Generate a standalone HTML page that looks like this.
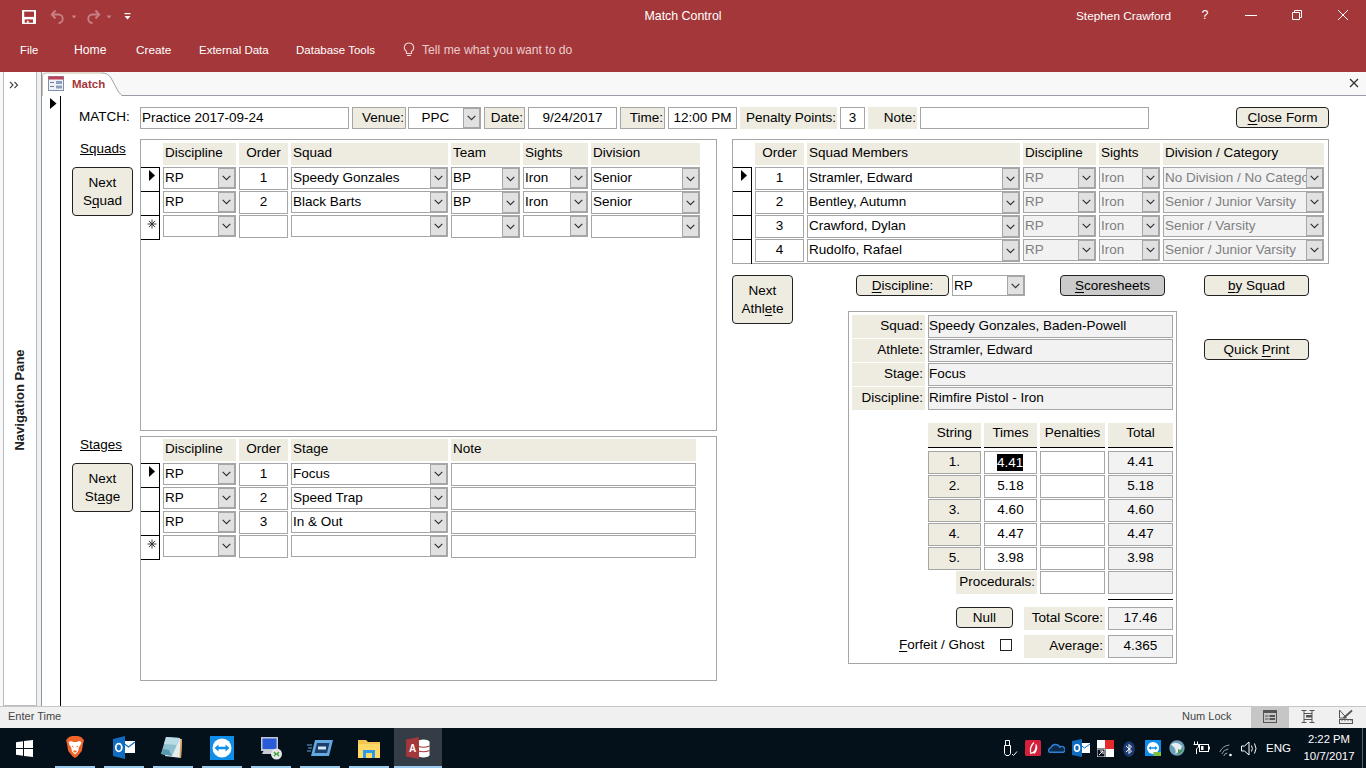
<!DOCTYPE html>
<html><head><meta charset="utf-8"><title>Match Control</title>
<style>
html,body{margin:0;padding:0;width:1366px;height:768px;overflow:hidden;background:#fff;}
body{position:relative;font-family:'Liberation Sans', sans-serif;font-size:13.5px;color:#000;}
body>div,body>svg{position:absolute;box-sizing:border-box;}
u{text-decoration:underline;text-underline-offset:2px;}
</style></head><body>
<div style="left:0px;top:0px;width:1366px;height:72px;background:#A4373A;"></div>
<div style="left:600px;top:1px;width:166px;height:31px;line-height:31px;font-size:12.4px;color:#fff;text-align:center;font-weight:normal;white-space:nowrap;overflow:hidden;">Match Control</div>
<div style="left:1060px;top:1px;width:130px;height:31px;line-height:31px;font-size:11.8px;color:#fff;text-align:left;font-weight:normal;white-space:nowrap;overflow:hidden;padding-left:16px;">Stephen Crawford</div>
<div style="left:1195px;top:0px;width:20px;height:30px;line-height:30px;font-size:12.5px;color:#fff;text-align:center;font-weight:normal;white-space:nowrap;overflow:hidden;">?</div>
<div style="left:1245px;top:15px;width:12px;height:1px;background:#fff;"></div>
<svg style="left:1291px;top:9px;width:13px;height:12px" viewBox="0 0 13 12"><path d="M1.5 3.5 h7 v7 h-7 z M3.5 3.5 v-2 h7 v7 h-2" fill="none" stroke="#fff" stroke-width="1"/></svg>
<svg style="left:1337px;top:9px;width:12px;height:12px" viewBox="0 0 12 12"><path d="M1 1 L11 11 M11 1 L1 11" fill="none" stroke="#fff" stroke-width="1"/></svg>
<svg style="left:22px;top:10px;width:14px;height:14px" viewBox="0 0 14 14"><rect x="0" y="0" width="14" height="14" rx="0.8" fill="#fff"/><rect x="2.2" y="1.6" width="9.8" height="5.3" fill="#A4373A"/><rect x="2.7" y="9.4" width="8.3" height="3.3" fill="#A4373A"/><rect x="4.9" y="10.8" width="1.8" height="2" fill="#fff"/></svg>
<svg style="left:50px;top:9px;width:28px;height:15px" viewBox="0 0 28 15"><path d="M2 5.5 h6.5 a4.2 4.2 0 0 1 0 8.5" fill="none" stroke="#C98083" stroke-width="1.9"/><path d="M5.5 1.5 L1.8 5.5 L5.5 9.5" fill="none" stroke="#C98083" stroke-width="1.9"/><path d="M21.5 6.5 h5 l-2.5 3 z" fill="#C98083"/></svg>
<svg style="left:85px;top:9px;width:28px;height:15px" viewBox="0 0 28 15"><path d="M14 5.5 h-6.5 a4.2 4.2 0 0 0 0 8.5" fill="none" stroke="#C98083" stroke-width="1.9"/><path d="M10.5 1.5 L14.2 5.5 L10.5 9.5" fill="none" stroke="#C98083" stroke-width="1.9"/><path d="M21.5 6.5 h5 l-2.5 3 z" fill="#C98083"/></svg>
<svg style="left:124px;top:13px;width:7px;height:8px" viewBox="0 0 7 8"><rect x="0.5" y="0" width="6" height="1.2" fill="#fff"/><path d="M0.5 3 h6 l-3 3.5 z" fill="#fff"/></svg>
<div style="left:20px;top:40px;height:20px;line-height:20px;font-size:11.3px;color:#fff;white-space:nowrap">File</div>
<div style="left:74px;top:40px;height:20px;line-height:20px;font-size:12.2px;color:#fff;white-space:nowrap">Home</div>
<div style="left:136px;top:40px;height:20px;line-height:20px;font-size:11.8px;color:#fff;white-space:nowrap">Create</div>
<div style="left:199px;top:40px;height:20px;line-height:20px;font-size:11.5px;color:#fff;white-space:nowrap">External Data</div>
<div style="left:296px;top:40px;height:20px;line-height:20px;font-size:11.5px;color:#fff;white-space:nowrap">Database Tools</div>
<svg style="left:403px;top:42px;width:12px;height:15px" viewBox="0 0 12 15"><path d="M6 1 a4.6 4.6 0 0 0 -2.5 8.5 v2 h5 v-2 a4.6 4.6 0 0 0 -2.5 -8.5 z M4 13.5 h4" fill="none" stroke="#F0D6D6" stroke-width="1.1"/></svg>
<div style="left:422px;top:40px;height:20px;line-height:20px;font-size:12.2px;color:#EBCDCE;white-space:nowrap">Tell me what you want to do</div>
<div style="left:0px;top:72px;width:1366px;height:635px;background:#F8F8F8;"></div>
<div style="left:3px;top:72px;width:34px;height:634px;background:#fff;border-left:1px solid #B9BDC3;border-right:1px solid #B9BDC3;border-bottom:1px solid #B9BDC3;"></div>
<div style="left:37px;top:72px;width:4px;height:634px;background:#EEF0F2;"></div>
<div style="left:41px;top:72px;width:1px;height:634px;background:#92969D;"></div>
<svg style="left:9px;top:81px;width:10px;height:8px" viewBox="0 0 10 8"><path d="M1 0.8 L4 4 L1 7.2 M5.5 0.8 L8.5 4 L5.5 7.2" fill="none" stroke="#444" stroke-width="1.2"/></svg>
<div style="left:-31px;top:393px;width:102px;height:14px;line-height:14px;font-size:13px;font-weight:bold;color:#222;transform:rotate(-90deg);text-align:center;white-space:nowrap">Navigation Pane</div>
<div style="left:42px;top:72px;width:1324px;height:24px;background:#F8F8F8;"></div>
<div style="left:42px;top:95px;width:1324px;height:1px;background:#989DA5;"></div>
<svg style="left:42px;top:72px;width:80px;height:24px" viewBox="0 0 80 24"><path d="M0.5 24 V4 Q0.5 1 4 1 H62 Q66 1 69 6 L76 19 Q79 23 80 23.5 V24 z" fill="#fff"/><path d="M60 1 Q66 1 69 6 L76 19 Q79 23 80 23.5" fill="none" stroke="#A0A4AA" stroke-width="1"/><path d="M0.5 23 V4 Q0.5 1 4 1 H61" fill="none" stroke="#C9BDA6" stroke-width="1"/></svg>
<div style="left:43px;top:95px;width:75px;height:1px;background:#fff;"></div>
<svg style="left:48px;top:76px;width:16px;height:15px" viewBox="0 0 16 15"><rect x="0.5" y="0.5" width="15" height="14" fill="#EEF2F8" stroke="#7F8FA6"/><rect x="0.5" y="0.5" width="15" height="3" fill="#C0405A"/><rect x="2" y="6" width="4" height="1" fill="#6D7C92"/><rect x="2" y="10" width="4" height="1" fill="#6D7C92"/><rect x="8" y="5" width="6" height="3" fill="#8DA0BB"/><rect x="8" y="9.5" width="6" height="3" fill="#8DA0BB"/></svg>
<div style="left:72px;top:74px;height:20px;line-height:20px;font-size:11.5px;font-weight:bold;color:#A4373A;white-space:nowrap">Match</div>
<svg style="left:1349px;top:78px;width:10px;height:10px" viewBox="0 0 10 10"><path d="M1 1 L9 9 M9 1 L1 9" fill="none" stroke="#333" stroke-width="1.3"/></svg>
<div style="left:42px;top:96px;width:1324px;height:610px;background:#fff;"></div>
<div style="left:60px;top:96px;width:1px;height:610px;background:#000;"></div>
<svg style="left:50px;top:98px;width:7px;height:11px" viewBox="0 0 7 11"><path d="M0 0 L6.5 5.5 L0 11 z" fill="#000"/></svg>
<div style="left:76px;top:106px;width:64px;height:21px;line-height:21px;font-size:13.5px;color:#000;text-align:left;font-weight:normal;white-space:nowrap;overflow:hidden;padding-left:3px;">MATCH:</div>
<div style="left:140px;top:107px;width:209px;height:22px;background:#fff;border:1px solid #A6A6A6;"></div>
<div style="left:140px;top:107px;width:209px;height:22px;line-height:22px;font-size:13.5px;color:#000;text-align:left;font-weight:normal;white-space:nowrap;overflow:hidden;padding-left:2px;">Practice 2017-09-24</div>
<div style="left:352px;top:107px;width:54px;height:22px;background:#EEECE1;border:1px solid #A6A6A6;"></div>
<div style="left:352px;top:107px;width:54px;height:22px;line-height:22px;font-size:13.5px;color:#000;text-align:right;font-weight:normal;white-space:nowrap;overflow:hidden;padding-right:2px;">Venue:</div>
<div style="left:408px;top:107px;width:73px;height:22px;background:#fff;border:1px solid #A6A6A6;"></div>
<div style="left:408px;top:107px;width:55px;height:22px;line-height:22px;font-size:13.5px;color:#000;text-align:center;font-weight:normal;white-space:nowrap;overflow:hidden;">PPC</div>
<div style="left:463px;top:107px;width:18px;height:22px;background:#E1E1E1;border-style:solid;border-color:#A6A6A6;border-width:2px 2px 2px 1px;"></div>
<svg style="left:467.0px;top:115.0px;width:9px;height:6px" viewBox="0 0 9 6"><path d="M0.7 0.8 L4.5 4.6 L8.3 0.8" fill="none" stroke="#333" stroke-width="1.2"/></svg>
<div style="left:484px;top:107px;width:41px;height:22px;background:#EEECE1;border:1px solid #A6A6A6;"></div>
<div style="left:484px;top:107px;width:41px;height:22px;line-height:22px;font-size:13.5px;color:#000;text-align:right;font-weight:normal;white-space:nowrap;overflow:hidden;padding-right:2px;">Date:</div>
<div style="left:528px;top:107px;width:89px;height:22px;background:#fff;border:1px solid #A6A6A6;"></div>
<div style="left:528px;top:107px;width:89px;height:22px;line-height:22px;font-size:13.5px;color:#000;text-align:center;font-weight:normal;white-space:nowrap;overflow:hidden;">9/24/2017</div>
<div style="left:620px;top:107px;width:45px;height:22px;background:#EEECE1;border:1px solid #A6A6A6;"></div>
<div style="left:620px;top:107px;width:45px;height:22px;line-height:22px;font-size:13.5px;color:#000;text-align:right;font-weight:normal;white-space:nowrap;overflow:hidden;padding-right:2px;">Time:</div>
<div style="left:668px;top:107px;width:69px;height:22px;background:#fff;border:1px solid #A6A6A6;"></div>
<div style="left:668px;top:107px;width:69px;height:22px;line-height:22px;font-size:13.5px;color:#000;text-align:center;font-weight:normal;white-space:nowrap;overflow:hidden;">12:00 PM</div>
<div style="left:740px;top:107px;width:97px;height:22px;background:#EEECE1;"></div>
<div style="left:740px;top:107px;width:97px;height:22px;line-height:22px;font-size:13.5px;color:#000;text-align:right;font-weight:normal;white-space:nowrap;overflow:hidden;padding-right:1px;">Penalty Points:</div>
<div style="left:840px;top:107px;width:25px;height:22px;background:#fff;border:1px solid #A6A6A6;"></div>
<div style="left:840px;top:107px;width:25px;height:22px;line-height:22px;font-size:13.5px;color:#000;text-align:center;font-weight:normal;white-space:nowrap;overflow:hidden;">3</div>
<div style="left:868px;top:107px;width:49px;height:22px;background:#EEECE1;"></div>
<div style="left:868px;top:107px;width:49px;height:22px;line-height:22px;font-size:13.5px;color:#000;text-align:right;font-weight:normal;white-space:nowrap;overflow:hidden;padding-right:1px;">Note:</div>
<div style="left:920px;top:107px;width:229px;height:22px;background:#fff;border:1px solid #A6A6A6;"></div>
<div style="left:1236px;top:107px;width:93px;height:21px;background:#EEECE1;border:1px solid #222;border-radius:4px;"></div>
<div style="left:1236px;top:107px;width:93px;height:21px;display:flex;align-items:center;justify-content:center;text-align:center;font-size:13.5px;line-height:21px;color:#000;"><span><u>C</u>lose Form</span></div>
<div style="left:80px;top:139px;height:20px;line-height:20px;font-size:13.5px;color:#000;text-decoration:underline;white-space:nowrap">Squads</div>
<div style="left:72px;top:167px;width:61px;height:49px;background:#EEECE1;border:1px solid #222;border-radius:4px;"></div>
<div style="left:72px;top:167px;width:61px;height:49px;display:flex;align-items:center;justify-content:center;text-align:center;font-size:13.5px;line-height:49px;color:#000;"><span style="line-height:18px">Next<br>S<u>q</u>uad</span></div>
<div style="left:140px;top:139px;width:577px;height:292px;background:#fff;border:1px solid #A6A6A6;"></div>
<div style="left:163px;top:143px;width:73px;height:22px;background:#EEECE1;"></div>
<div style="left:163px;top:142px;width:73px;height:22px;line-height:22px;font-size:13.5px;color:#000;text-align:left;font-weight:normal;white-space:nowrap;overflow:hidden;padding-left:2px;">Discipline</div>
<div style="left:239px;top:143px;width:49px;height:22px;background:#EEECE1;"></div>
<div style="left:239px;top:142px;width:49px;height:22px;line-height:22px;font-size:13.5px;color:#000;text-align:center;font-weight:normal;white-space:nowrap;overflow:hidden;">Order</div>
<div style="left:291px;top:143px;width:157px;height:22px;background:#EEECE1;"></div>
<div style="left:291px;top:142px;width:157px;height:22px;line-height:22px;font-size:13.5px;color:#000;text-align:left;font-weight:normal;white-space:nowrap;overflow:hidden;padding-left:2px;">Squad</div>
<div style="left:451px;top:143px;width:69px;height:22px;background:#EEECE1;"></div>
<div style="left:451px;top:142px;width:69px;height:22px;line-height:22px;font-size:13.5px;color:#000;text-align:left;font-weight:normal;white-space:nowrap;overflow:hidden;padding-left:2px;">Team</div>
<div style="left:523px;top:143px;width:65px;height:22px;background:#EEECE1;"></div>
<div style="left:523px;top:142px;width:65px;height:22px;line-height:22px;font-size:13.5px;color:#000;text-align:left;font-weight:normal;white-space:nowrap;overflow:hidden;padding-left:2px;">Sights</div>
<div style="left:591px;top:143px;width:109px;height:22px;background:#EEECE1;"></div>
<div style="left:591px;top:142px;width:109px;height:22px;line-height:22px;font-size:13.5px;color:#000;text-align:left;font-weight:normal;white-space:nowrap;overflow:hidden;padding-left:2px;">Division</div>
<div style="left:159px;top:167px;width:1px;height:73px;background:#000;"></div>
<div style="left:141px;top:167px;width:19px;height:1px;background:#000;"></div>
<div style="left:141px;top:191px;width:19px;height:1px;background:#000;"></div>
<div style="left:141px;top:215px;width:19px;height:1px;background:#000;"></div>
<div style="left:141px;top:239px;width:19px;height:1px;background:#000;"></div>
<svg style="left:149px;top:170px;width:7px;height:11px" viewBox="0 0 7 11"><path d="M0 0 L6 5.5 L0 11 z" fill="#000"/></svg>
<svg style="left:147px;top:219px;width:10px;height:10px" viewBox="0 0 10 10"><path d="M5 0.5 V9.5 M0.5 5 H9.5 M1.8 1.8 L8.2 8.2 M1.8 8.2 L8.2 1.8" fill="none" stroke="#333" stroke-width="1"/></svg>
<div style="left:163px;top:167px;width:73px;height:22px;background:#fff;border:1px solid #A6A6A6;"></div>
<div style="left:163px;top:167px;width:55px;height:22px;line-height:22px;font-size:13.5px;color:#000;text-align:left;font-weight:normal;white-space:nowrap;overflow:hidden;padding-left:2px;">RP</div>
<div style="left:218px;top:167px;width:18px;height:22px;background:#E1E1E1;border-style:solid;border-color:#A6A6A6;border-width:2px 2px 2px 1px;"></div>
<svg style="left:222.0px;top:175.0px;width:9px;height:6px" viewBox="0 0 9 6"><path d="M0.7 0.8 L4.5 4.6 L8.3 0.8" fill="none" stroke="#333" stroke-width="1.2"/></svg>
<div style="left:239px;top:167px;width:49px;height:23px;background:#fff;border:1px solid #A6A6A6;"></div>
<div style="left:239px;top:166px;width:49px;height:23px;line-height:23px;font-size:13.5px;color:#000;text-align:center;font-weight:normal;white-space:nowrap;overflow:hidden;">1</div>
<div style="left:291px;top:167px;width:157px;height:22px;background:#fff;border:1px solid #A6A6A6;"></div>
<div style="left:291px;top:167px;width:139px;height:22px;line-height:22px;font-size:13.5px;color:#000;text-align:left;font-weight:normal;white-space:nowrap;overflow:hidden;padding-left:2px;">Speedy Gonzales</div>
<div style="left:430px;top:167px;width:18px;height:22px;background:#E1E1E1;border-style:solid;border-color:#A6A6A6;border-width:2px 2px 2px 1px;"></div>
<svg style="left:434.0px;top:175.0px;width:9px;height:6px" viewBox="0 0 9 6"><path d="M0.7 0.8 L4.5 4.6 L8.3 0.8" fill="none" stroke="#333" stroke-width="1.2"/></svg>
<div style="left:451px;top:167px;width:69px;height:23px;background:#fff;border:1px solid #A6A6A6;"></div>
<div style="left:451px;top:166px;width:51px;height:23px;line-height:23px;font-size:13.5px;color:#000;text-align:left;font-weight:normal;white-space:nowrap;overflow:hidden;padding-left:2px;">BP</div>
<div style="left:502px;top:167px;width:18px;height:23px;background:#E1E1E1;border-style:solid;border-color:#A6A6A6;border-width:2px 2px 2px 1px;"></div>
<svg style="left:506.0px;top:175.5px;width:9px;height:6px" viewBox="0 0 9 6"><path d="M0.7 0.8 L4.5 4.6 L8.3 0.8" fill="none" stroke="#333" stroke-width="1.2"/></svg>
<div style="left:523px;top:167px;width:65px;height:22px;background:#fff;border:1px solid #A6A6A6;"></div>
<div style="left:523px;top:167px;width:47px;height:22px;line-height:22px;font-size:13.5px;color:#000;text-align:left;font-weight:normal;white-space:nowrap;overflow:hidden;padding-left:2px;">Iron</div>
<div style="left:570px;top:167px;width:18px;height:22px;background:#E1E1E1;border-style:solid;border-color:#A6A6A6;border-width:2px 2px 2px 1px;"></div>
<svg style="left:574.0px;top:175.0px;width:9px;height:6px" viewBox="0 0 9 6"><path d="M0.7 0.8 L4.5 4.6 L8.3 0.8" fill="none" stroke="#333" stroke-width="1.2"/></svg>
<div style="left:591px;top:167px;width:109px;height:23px;background:#fff;border:1px solid #A6A6A6;"></div>
<div style="left:591px;top:166px;width:91px;height:23px;line-height:23px;font-size:13.5px;color:#000;text-align:left;font-weight:normal;white-space:nowrap;overflow:hidden;padding-left:2px;">Senior</div>
<div style="left:682px;top:167px;width:18px;height:23px;background:#E1E1E1;border-style:solid;border-color:#A6A6A6;border-width:2px 2px 2px 1px;"></div>
<svg style="left:686.0px;top:175.5px;width:9px;height:6px" viewBox="0 0 9 6"><path d="M0.7 0.8 L4.5 4.6 L8.3 0.8" fill="none" stroke="#333" stroke-width="1.2"/></svg>
<div style="left:163px;top:191px;width:73px;height:22px;background:#fff;border:1px solid #A6A6A6;"></div>
<div style="left:163px;top:191px;width:55px;height:22px;line-height:22px;font-size:13.5px;color:#000;text-align:left;font-weight:normal;white-space:nowrap;overflow:hidden;padding-left:2px;">RP</div>
<div style="left:218px;top:191px;width:18px;height:22px;background:#E1E1E1;border-style:solid;border-color:#A6A6A6;border-width:2px 2px 2px 1px;"></div>
<svg style="left:222.0px;top:199.0px;width:9px;height:6px" viewBox="0 0 9 6"><path d="M0.7 0.8 L4.5 4.6 L8.3 0.8" fill="none" stroke="#333" stroke-width="1.2"/></svg>
<div style="left:239px;top:191px;width:49px;height:23px;background:#fff;border:1px solid #A6A6A6;"></div>
<div style="left:239px;top:190px;width:49px;height:23px;line-height:23px;font-size:13.5px;color:#000;text-align:center;font-weight:normal;white-space:nowrap;overflow:hidden;">2</div>
<div style="left:291px;top:191px;width:157px;height:22px;background:#fff;border:1px solid #A6A6A6;"></div>
<div style="left:291px;top:191px;width:139px;height:22px;line-height:22px;font-size:13.5px;color:#000;text-align:left;font-weight:normal;white-space:nowrap;overflow:hidden;padding-left:2px;">Black Barts</div>
<div style="left:430px;top:191px;width:18px;height:22px;background:#E1E1E1;border-style:solid;border-color:#A6A6A6;border-width:2px 2px 2px 1px;"></div>
<svg style="left:434.0px;top:199.0px;width:9px;height:6px" viewBox="0 0 9 6"><path d="M0.7 0.8 L4.5 4.6 L8.3 0.8" fill="none" stroke="#333" stroke-width="1.2"/></svg>
<div style="left:451px;top:191px;width:69px;height:23px;background:#fff;border:1px solid #A6A6A6;"></div>
<div style="left:451px;top:190px;width:51px;height:23px;line-height:23px;font-size:13.5px;color:#000;text-align:left;font-weight:normal;white-space:nowrap;overflow:hidden;padding-left:2px;">BP</div>
<div style="left:502px;top:191px;width:18px;height:23px;background:#E1E1E1;border-style:solid;border-color:#A6A6A6;border-width:2px 2px 2px 1px;"></div>
<svg style="left:506.0px;top:199.5px;width:9px;height:6px" viewBox="0 0 9 6"><path d="M0.7 0.8 L4.5 4.6 L8.3 0.8" fill="none" stroke="#333" stroke-width="1.2"/></svg>
<div style="left:523px;top:191px;width:65px;height:22px;background:#fff;border:1px solid #A6A6A6;"></div>
<div style="left:523px;top:191px;width:47px;height:22px;line-height:22px;font-size:13.5px;color:#000;text-align:left;font-weight:normal;white-space:nowrap;overflow:hidden;padding-left:2px;">Iron</div>
<div style="left:570px;top:191px;width:18px;height:22px;background:#E1E1E1;border-style:solid;border-color:#A6A6A6;border-width:2px 2px 2px 1px;"></div>
<svg style="left:574.0px;top:199.0px;width:9px;height:6px" viewBox="0 0 9 6"><path d="M0.7 0.8 L4.5 4.6 L8.3 0.8" fill="none" stroke="#333" stroke-width="1.2"/></svg>
<div style="left:591px;top:191px;width:109px;height:23px;background:#fff;border:1px solid #A6A6A6;"></div>
<div style="left:591px;top:190px;width:91px;height:23px;line-height:23px;font-size:13.5px;color:#000;text-align:left;font-weight:normal;white-space:nowrap;overflow:hidden;padding-left:2px;">Senior</div>
<div style="left:682px;top:191px;width:18px;height:23px;background:#E1E1E1;border-style:solid;border-color:#A6A6A6;border-width:2px 2px 2px 1px;"></div>
<svg style="left:686.0px;top:199.5px;width:9px;height:6px" viewBox="0 0 9 6"><path d="M0.7 0.8 L4.5 4.6 L8.3 0.8" fill="none" stroke="#333" stroke-width="1.2"/></svg>
<div style="left:163px;top:215px;width:73px;height:22px;background:#fff;border:1px solid #A6A6A6;"></div>
<div style="left:218px;top:215px;width:18px;height:22px;background:#E1E1E1;border-style:solid;border-color:#A6A6A6;border-width:2px 2px 2px 1px;"></div>
<svg style="left:222.0px;top:223.0px;width:9px;height:6px" viewBox="0 0 9 6"><path d="M0.7 0.8 L4.5 4.6 L8.3 0.8" fill="none" stroke="#333" stroke-width="1.2"/></svg>
<div style="left:239px;top:215px;width:49px;height:23px;background:#fff;border:1px solid #A6A6A6;"></div>
<div style="left:291px;top:215px;width:157px;height:22px;background:#fff;border:1px solid #A6A6A6;"></div>
<div style="left:430px;top:215px;width:18px;height:22px;background:#E1E1E1;border-style:solid;border-color:#A6A6A6;border-width:2px 2px 2px 1px;"></div>
<svg style="left:434.0px;top:223.0px;width:9px;height:6px" viewBox="0 0 9 6"><path d="M0.7 0.8 L4.5 4.6 L8.3 0.8" fill="none" stroke="#333" stroke-width="1.2"/></svg>
<div style="left:451px;top:215px;width:69px;height:23px;background:#fff;border:1px solid #A6A6A6;"></div>
<div style="left:502px;top:215px;width:18px;height:23px;background:#E1E1E1;border-style:solid;border-color:#A6A6A6;border-width:2px 2px 2px 1px;"></div>
<svg style="left:506.0px;top:223.5px;width:9px;height:6px" viewBox="0 0 9 6"><path d="M0.7 0.8 L4.5 4.6 L8.3 0.8" fill="none" stroke="#333" stroke-width="1.2"/></svg>
<div style="left:523px;top:215px;width:65px;height:22px;background:#fff;border:1px solid #A6A6A6;"></div>
<div style="left:570px;top:215px;width:18px;height:22px;background:#E1E1E1;border-style:solid;border-color:#A6A6A6;border-width:2px 2px 2px 1px;"></div>
<svg style="left:574.0px;top:223.0px;width:9px;height:6px" viewBox="0 0 9 6"><path d="M0.7 0.8 L4.5 4.6 L8.3 0.8" fill="none" stroke="#333" stroke-width="1.2"/></svg>
<div style="left:591px;top:215px;width:109px;height:23px;background:#fff;border:1px solid #A6A6A6;"></div>
<div style="left:682px;top:215px;width:18px;height:23px;background:#E1E1E1;border-style:solid;border-color:#A6A6A6;border-width:2px 2px 2px 1px;"></div>
<svg style="left:686.0px;top:223.5px;width:9px;height:6px" viewBox="0 0 9 6"><path d="M0.7 0.8 L4.5 4.6 L8.3 0.8" fill="none" stroke="#333" stroke-width="1.2"/></svg>
<div style="left:80px;top:435px;height:20px;line-height:20px;font-size:13.5px;color:#000;text-decoration:underline;white-space:nowrap">Stages</div>
<div style="left:72px;top:463px;width:61px;height:49px;background:#EEECE1;border:1px solid #222;border-radius:4px;"></div>
<div style="left:72px;top:463px;width:61px;height:49px;display:flex;align-items:center;justify-content:center;text-align:center;font-size:13.5px;line-height:49px;color:#000;"><span style="line-height:18px">Next<br>St<u>a</u>ge</span></div>
<div style="left:140px;top:436px;width:577px;height:245px;background:#fff;border:1px solid #A6A6A6;"></div>
<div style="left:163px;top:439px;width:73px;height:22px;background:#EEECE1;"></div>
<div style="left:163px;top:438px;width:73px;height:22px;line-height:22px;font-size:13.5px;color:#000;text-align:left;font-weight:normal;white-space:nowrap;overflow:hidden;padding-left:2px;">Discipline</div>
<div style="left:239px;top:439px;width:49px;height:22px;background:#EEECE1;"></div>
<div style="left:239px;top:438px;width:49px;height:22px;line-height:22px;font-size:13.5px;color:#000;text-align:center;font-weight:normal;white-space:nowrap;overflow:hidden;">Order</div>
<div style="left:291px;top:439px;width:157px;height:22px;background:#EEECE1;"></div>
<div style="left:291px;top:438px;width:157px;height:22px;line-height:22px;font-size:13.5px;color:#000;text-align:left;font-weight:normal;white-space:nowrap;overflow:hidden;padding-left:2px;">Stage</div>
<div style="left:451px;top:439px;width:245px;height:22px;background:#EEECE1;"></div>
<div style="left:451px;top:438px;width:245px;height:22px;line-height:22px;font-size:13.5px;color:#000;text-align:left;font-weight:normal;white-space:nowrap;overflow:hidden;padding-left:2px;">Note</div>
<div style="left:159px;top:463px;width:1px;height:97px;background:#000;"></div>
<div style="left:141px;top:463px;width:19px;height:1px;background:#000;"></div>
<div style="left:141px;top:487px;width:19px;height:1px;background:#000;"></div>
<div style="left:141px;top:511px;width:19px;height:1px;background:#000;"></div>
<div style="left:141px;top:535px;width:19px;height:1px;background:#000;"></div>
<div style="left:141px;top:559px;width:19px;height:1px;background:#000;"></div>
<svg style="left:149px;top:466px;width:7px;height:11px" viewBox="0 0 7 11"><path d="M0 0 L6 5.5 L0 11 z" fill="#000"/></svg>
<svg style="left:147px;top:539px;width:10px;height:10px" viewBox="0 0 10 10"><path d="M5 0.5 V9.5 M0.5 5 H9.5 M1.8 1.8 L8.2 8.2 M1.8 8.2 L8.2 1.8" fill="none" stroke="#333" stroke-width="1"/></svg>
<div style="left:163px;top:463px;width:73px;height:22px;background:#fff;border:1px solid #A6A6A6;"></div>
<div style="left:163px;top:463px;width:55px;height:22px;line-height:22px;font-size:13.5px;color:#000;text-align:left;font-weight:normal;white-space:nowrap;overflow:hidden;padding-left:2px;">RP</div>
<div style="left:218px;top:463px;width:18px;height:22px;background:#E1E1E1;border-style:solid;border-color:#A6A6A6;border-width:2px 2px 2px 1px;"></div>
<svg style="left:222.0px;top:471.0px;width:9px;height:6px" viewBox="0 0 9 6"><path d="M0.7 0.8 L4.5 4.6 L8.3 0.8" fill="none" stroke="#333" stroke-width="1.2"/></svg>
<div style="left:239px;top:463px;width:49px;height:23px;background:#fff;border:1px solid #A6A6A6;"></div>
<div style="left:239px;top:462px;width:49px;height:23px;line-height:23px;font-size:13.5px;color:#000;text-align:center;font-weight:normal;white-space:nowrap;overflow:hidden;">1</div>
<div style="left:291px;top:463px;width:157px;height:22px;background:#fff;border:1px solid #A6A6A6;"></div>
<div style="left:291px;top:463px;width:139px;height:22px;line-height:22px;font-size:13.5px;color:#000;text-align:left;font-weight:normal;white-space:nowrap;overflow:hidden;padding-left:2px;">Focus</div>
<div style="left:430px;top:463px;width:18px;height:22px;background:#E1E1E1;border-style:solid;border-color:#A6A6A6;border-width:2px 2px 2px 1px;"></div>
<svg style="left:434.0px;top:471.0px;width:9px;height:6px" viewBox="0 0 9 6"><path d="M0.7 0.8 L4.5 4.6 L8.3 0.8" fill="none" stroke="#333" stroke-width="1.2"/></svg>
<div style="left:451px;top:463px;width:245px;height:23px;background:#fff;border:1px solid #A6A6A6;"></div>
<div style="left:163px;top:487px;width:73px;height:22px;background:#fff;border:1px solid #A6A6A6;"></div>
<div style="left:163px;top:487px;width:55px;height:22px;line-height:22px;font-size:13.5px;color:#000;text-align:left;font-weight:normal;white-space:nowrap;overflow:hidden;padding-left:2px;">RP</div>
<div style="left:218px;top:487px;width:18px;height:22px;background:#E1E1E1;border-style:solid;border-color:#A6A6A6;border-width:2px 2px 2px 1px;"></div>
<svg style="left:222.0px;top:495.0px;width:9px;height:6px" viewBox="0 0 9 6"><path d="M0.7 0.8 L4.5 4.6 L8.3 0.8" fill="none" stroke="#333" stroke-width="1.2"/></svg>
<div style="left:239px;top:487px;width:49px;height:23px;background:#fff;border:1px solid #A6A6A6;"></div>
<div style="left:239px;top:486px;width:49px;height:23px;line-height:23px;font-size:13.5px;color:#000;text-align:center;font-weight:normal;white-space:nowrap;overflow:hidden;">2</div>
<div style="left:291px;top:487px;width:157px;height:22px;background:#fff;border:1px solid #A6A6A6;"></div>
<div style="left:291px;top:487px;width:139px;height:22px;line-height:22px;font-size:13.5px;color:#000;text-align:left;font-weight:normal;white-space:nowrap;overflow:hidden;padding-left:2px;">Speed Trap</div>
<div style="left:430px;top:487px;width:18px;height:22px;background:#E1E1E1;border-style:solid;border-color:#A6A6A6;border-width:2px 2px 2px 1px;"></div>
<svg style="left:434.0px;top:495.0px;width:9px;height:6px" viewBox="0 0 9 6"><path d="M0.7 0.8 L4.5 4.6 L8.3 0.8" fill="none" stroke="#333" stroke-width="1.2"/></svg>
<div style="left:451px;top:487px;width:245px;height:23px;background:#fff;border:1px solid #A6A6A6;"></div>
<div style="left:163px;top:511px;width:73px;height:22px;background:#fff;border:1px solid #A6A6A6;"></div>
<div style="left:163px;top:511px;width:55px;height:22px;line-height:22px;font-size:13.5px;color:#000;text-align:left;font-weight:normal;white-space:nowrap;overflow:hidden;padding-left:2px;">RP</div>
<div style="left:218px;top:511px;width:18px;height:22px;background:#E1E1E1;border-style:solid;border-color:#A6A6A6;border-width:2px 2px 2px 1px;"></div>
<svg style="left:222.0px;top:519.0px;width:9px;height:6px" viewBox="0 0 9 6"><path d="M0.7 0.8 L4.5 4.6 L8.3 0.8" fill="none" stroke="#333" stroke-width="1.2"/></svg>
<div style="left:239px;top:511px;width:49px;height:23px;background:#fff;border:1px solid #A6A6A6;"></div>
<div style="left:239px;top:510px;width:49px;height:23px;line-height:23px;font-size:13.5px;color:#000;text-align:center;font-weight:normal;white-space:nowrap;overflow:hidden;">3</div>
<div style="left:291px;top:511px;width:157px;height:22px;background:#fff;border:1px solid #A6A6A6;"></div>
<div style="left:291px;top:511px;width:139px;height:22px;line-height:22px;font-size:13.5px;color:#000;text-align:left;font-weight:normal;white-space:nowrap;overflow:hidden;padding-left:2px;">In &amp; Out</div>
<div style="left:430px;top:511px;width:18px;height:22px;background:#E1E1E1;border-style:solid;border-color:#A6A6A6;border-width:2px 2px 2px 1px;"></div>
<svg style="left:434.0px;top:519.0px;width:9px;height:6px" viewBox="0 0 9 6"><path d="M0.7 0.8 L4.5 4.6 L8.3 0.8" fill="none" stroke="#333" stroke-width="1.2"/></svg>
<div style="left:451px;top:511px;width:245px;height:23px;background:#fff;border:1px solid #A6A6A6;"></div>
<div style="left:163px;top:535px;width:73px;height:22px;background:#fff;border:1px solid #A6A6A6;"></div>
<div style="left:218px;top:535px;width:18px;height:22px;background:#E1E1E1;border-style:solid;border-color:#A6A6A6;border-width:2px 2px 2px 1px;"></div>
<svg style="left:222.0px;top:543.0px;width:9px;height:6px" viewBox="0 0 9 6"><path d="M0.7 0.8 L4.5 4.6 L8.3 0.8" fill="none" stroke="#333" stroke-width="1.2"/></svg>
<div style="left:239px;top:535px;width:49px;height:23px;background:#fff;border:1px solid #A6A6A6;"></div>
<div style="left:291px;top:535px;width:157px;height:22px;background:#fff;border:1px solid #A6A6A6;"></div>
<div style="left:430px;top:535px;width:18px;height:22px;background:#E1E1E1;border-style:solid;border-color:#A6A6A6;border-width:2px 2px 2px 1px;"></div>
<svg style="left:434.0px;top:543.0px;width:9px;height:6px" viewBox="0 0 9 6"><path d="M0.7 0.8 L4.5 4.6 L8.3 0.8" fill="none" stroke="#333" stroke-width="1.2"/></svg>
<div style="left:451px;top:535px;width:245px;height:23px;background:#fff;border:1px solid #A6A6A6;"></div>
<div style="left:732px;top:139px;width:597px;height:125px;background:#fff;border:1px solid #A6A6A6;"></div>
<div style="left:755px;top:143px;width:49px;height:22px;background:#EEECE1;"></div>
<div style="left:755px;top:142px;width:49px;height:22px;line-height:22px;font-size:13.5px;color:#000;text-align:center;font-weight:normal;white-space:nowrap;overflow:hidden;">Order</div>
<div style="left:807px;top:143px;width:213px;height:22px;background:#EEECE1;"></div>
<div style="left:807px;top:142px;width:213px;height:22px;line-height:22px;font-size:13.5px;color:#000;text-align:left;font-weight:normal;white-space:nowrap;overflow:hidden;padding-left:2px;">Squad Members</div>
<div style="left:1023px;top:143px;width:73px;height:22px;background:#EEECE1;"></div>
<div style="left:1023px;top:142px;width:73px;height:22px;line-height:22px;font-size:13.5px;color:#000;text-align:left;font-weight:normal;white-space:nowrap;overflow:hidden;padding-left:2px;">Discipline</div>
<div style="left:1099px;top:143px;width:61px;height:22px;background:#EEECE1;"></div>
<div style="left:1099px;top:142px;width:61px;height:22px;line-height:22px;font-size:13.5px;color:#000;text-align:left;font-weight:normal;white-space:nowrap;overflow:hidden;padding-left:2px;">Sights</div>
<div style="left:1163px;top:143px;width:161px;height:22px;background:#EEECE1;"></div>
<div style="left:1163px;top:142px;width:161px;height:22px;line-height:22px;font-size:13.5px;color:#000;text-align:left;font-weight:normal;white-space:nowrap;overflow:hidden;padding-left:2px;">Division / Category</div>
<div style="left:751px;top:167px;width:1px;height:97px;background:#000;"></div>
<div style="left:733px;top:167px;width:19px;height:1px;background:#000;"></div>
<div style="left:733px;top:191px;width:19px;height:1px;background:#000;"></div>
<div style="left:733px;top:215px;width:19px;height:1px;background:#000;"></div>
<div style="left:733px;top:239px;width:19px;height:1px;background:#000;"></div>
<svg style="left:741px;top:170px;width:7px;height:11px" viewBox="0 0 7 11"><path d="M0 0 L6 5.5 L0 11 z" fill="#000"/></svg>
<div style="left:755px;top:167px;width:49px;height:23px;background:#fff;border:1px solid #A6A6A6;"></div>
<div style="left:755px;top:166px;width:49px;height:23px;line-height:23px;font-size:13.5px;color:#000;text-align:center;font-weight:normal;white-space:nowrap;overflow:hidden;">1</div>
<div style="left:807px;top:167px;width:213px;height:23px;background:#fff;border:1px solid #A6A6A6;"></div>
<div style="left:807px;top:166px;width:195px;height:23px;line-height:23px;font-size:13.5px;color:#000;text-align:left;font-weight:normal;white-space:nowrap;overflow:hidden;padding-left:2px;">Stramler, Edward</div>
<div style="left:1002px;top:167px;width:18px;height:23px;background:#E1E1E1;border-style:solid;border-color:#A6A6A6;border-width:2px 2px 2px 1px;"></div>
<svg style="left:1006.0px;top:175.5px;width:9px;height:6px" viewBox="0 0 9 6"><path d="M0.7 0.8 L4.5 4.6 L8.3 0.8" fill="none" stroke="#333" stroke-width="1.2"/></svg>
<div style="left:1023px;top:167px;width:73px;height:22px;background:#F2F2F2;border:1px solid #A6A6A6;"></div>
<div style="left:1023px;top:167px;width:55px;height:22px;line-height:22px;font-size:13.5px;color:#7F7F7F;text-align:left;font-weight:normal;white-space:nowrap;overflow:hidden;padding-left:2px;">RP</div>
<div style="left:1078px;top:167px;width:18px;height:22px;background:#E1E1E1;border-style:solid;border-color:#A6A6A6;border-width:2px 2px 2px 1px;"></div>
<svg style="left:1082.0px;top:175.0px;width:9px;height:6px" viewBox="0 0 9 6"><path d="M0.7 0.8 L4.5 4.6 L8.3 0.8" fill="none" stroke="#333" stroke-width="1.2"/></svg>
<div style="left:1099px;top:167px;width:61px;height:22px;background:#F2F2F2;border:1px solid #A6A6A6;"></div>
<div style="left:1099px;top:167px;width:43px;height:22px;line-height:22px;font-size:13.5px;color:#7F7F7F;text-align:left;font-weight:normal;white-space:nowrap;overflow:hidden;padding-left:2px;">Iron</div>
<div style="left:1142px;top:167px;width:18px;height:22px;background:#E1E1E1;border-style:solid;border-color:#A6A6A6;border-width:2px 2px 2px 1px;"></div>
<svg style="left:1146.0px;top:175.0px;width:9px;height:6px" viewBox="0 0 9 6"><path d="M0.7 0.8 L4.5 4.6 L8.3 0.8" fill="none" stroke="#333" stroke-width="1.2"/></svg>
<div style="left:1163px;top:167px;width:161px;height:22px;background:#F2F2F2;border:1px solid #A6A6A6;"></div>
<div style="left:1163px;top:167px;width:143px;height:22px;line-height:22px;font-size:13.5px;color:#7F7F7F;text-align:left;font-weight:normal;white-space:nowrap;overflow:hidden;padding-left:2px;">No Division / No Category</div>
<div style="left:1306px;top:167px;width:18px;height:22px;background:#E1E1E1;border-style:solid;border-color:#A6A6A6;border-width:2px 2px 2px 1px;"></div>
<svg style="left:1310.0px;top:175.0px;width:9px;height:6px" viewBox="0 0 9 6"><path d="M0.7 0.8 L4.5 4.6 L8.3 0.8" fill="none" stroke="#333" stroke-width="1.2"/></svg>
<div style="left:755px;top:191px;width:49px;height:23px;background:#fff;border:1px solid #A6A6A6;"></div>
<div style="left:755px;top:190px;width:49px;height:23px;line-height:23px;font-size:13.5px;color:#000;text-align:center;font-weight:normal;white-space:nowrap;overflow:hidden;">2</div>
<div style="left:807px;top:191px;width:213px;height:23px;background:#fff;border:1px solid #A6A6A6;"></div>
<div style="left:807px;top:190px;width:195px;height:23px;line-height:23px;font-size:13.5px;color:#000;text-align:left;font-weight:normal;white-space:nowrap;overflow:hidden;padding-left:2px;">Bentley, Autumn</div>
<div style="left:1002px;top:191px;width:18px;height:23px;background:#E1E1E1;border-style:solid;border-color:#A6A6A6;border-width:2px 2px 2px 1px;"></div>
<svg style="left:1006.0px;top:199.5px;width:9px;height:6px" viewBox="0 0 9 6"><path d="M0.7 0.8 L4.5 4.6 L8.3 0.8" fill="none" stroke="#333" stroke-width="1.2"/></svg>
<div style="left:1023px;top:191px;width:73px;height:22px;background:#F2F2F2;border:1px solid #A6A6A6;"></div>
<div style="left:1023px;top:191px;width:55px;height:22px;line-height:22px;font-size:13.5px;color:#7F7F7F;text-align:left;font-weight:normal;white-space:nowrap;overflow:hidden;padding-left:2px;">RP</div>
<div style="left:1078px;top:191px;width:18px;height:22px;background:#E1E1E1;border-style:solid;border-color:#A6A6A6;border-width:2px 2px 2px 1px;"></div>
<svg style="left:1082.0px;top:199.0px;width:9px;height:6px" viewBox="0 0 9 6"><path d="M0.7 0.8 L4.5 4.6 L8.3 0.8" fill="none" stroke="#333" stroke-width="1.2"/></svg>
<div style="left:1099px;top:191px;width:61px;height:22px;background:#F2F2F2;border:1px solid #A6A6A6;"></div>
<div style="left:1099px;top:191px;width:43px;height:22px;line-height:22px;font-size:13.5px;color:#7F7F7F;text-align:left;font-weight:normal;white-space:nowrap;overflow:hidden;padding-left:2px;">Iron</div>
<div style="left:1142px;top:191px;width:18px;height:22px;background:#E1E1E1;border-style:solid;border-color:#A6A6A6;border-width:2px 2px 2px 1px;"></div>
<svg style="left:1146.0px;top:199.0px;width:9px;height:6px" viewBox="0 0 9 6"><path d="M0.7 0.8 L4.5 4.6 L8.3 0.8" fill="none" stroke="#333" stroke-width="1.2"/></svg>
<div style="left:1163px;top:191px;width:161px;height:22px;background:#F2F2F2;border:1px solid #A6A6A6;"></div>
<div style="left:1163px;top:191px;width:143px;height:22px;line-height:22px;font-size:13.5px;color:#7F7F7F;text-align:left;font-weight:normal;white-space:nowrap;overflow:hidden;padding-left:2px;">Senior / Junior Varsity</div>
<div style="left:1306px;top:191px;width:18px;height:22px;background:#E1E1E1;border-style:solid;border-color:#A6A6A6;border-width:2px 2px 2px 1px;"></div>
<svg style="left:1310.0px;top:199.0px;width:9px;height:6px" viewBox="0 0 9 6"><path d="M0.7 0.8 L4.5 4.6 L8.3 0.8" fill="none" stroke="#333" stroke-width="1.2"/></svg>
<div style="left:755px;top:215px;width:49px;height:23px;background:#fff;border:1px solid #A6A6A6;"></div>
<div style="left:755px;top:214px;width:49px;height:23px;line-height:23px;font-size:13.5px;color:#000;text-align:center;font-weight:normal;white-space:nowrap;overflow:hidden;">3</div>
<div style="left:807px;top:215px;width:213px;height:23px;background:#fff;border:1px solid #A6A6A6;"></div>
<div style="left:807px;top:214px;width:195px;height:23px;line-height:23px;font-size:13.5px;color:#000;text-align:left;font-weight:normal;white-space:nowrap;overflow:hidden;padding-left:2px;">Crawford, Dylan</div>
<div style="left:1002px;top:215px;width:18px;height:23px;background:#E1E1E1;border-style:solid;border-color:#A6A6A6;border-width:2px 2px 2px 1px;"></div>
<svg style="left:1006.0px;top:223.5px;width:9px;height:6px" viewBox="0 0 9 6"><path d="M0.7 0.8 L4.5 4.6 L8.3 0.8" fill="none" stroke="#333" stroke-width="1.2"/></svg>
<div style="left:1023px;top:215px;width:73px;height:22px;background:#F2F2F2;border:1px solid #A6A6A6;"></div>
<div style="left:1023px;top:215px;width:55px;height:22px;line-height:22px;font-size:13.5px;color:#7F7F7F;text-align:left;font-weight:normal;white-space:nowrap;overflow:hidden;padding-left:2px;">RP</div>
<div style="left:1078px;top:215px;width:18px;height:22px;background:#E1E1E1;border-style:solid;border-color:#A6A6A6;border-width:2px 2px 2px 1px;"></div>
<svg style="left:1082.0px;top:223.0px;width:9px;height:6px" viewBox="0 0 9 6"><path d="M0.7 0.8 L4.5 4.6 L8.3 0.8" fill="none" stroke="#333" stroke-width="1.2"/></svg>
<div style="left:1099px;top:215px;width:61px;height:22px;background:#F2F2F2;border:1px solid #A6A6A6;"></div>
<div style="left:1099px;top:215px;width:43px;height:22px;line-height:22px;font-size:13.5px;color:#7F7F7F;text-align:left;font-weight:normal;white-space:nowrap;overflow:hidden;padding-left:2px;">Iron</div>
<div style="left:1142px;top:215px;width:18px;height:22px;background:#E1E1E1;border-style:solid;border-color:#A6A6A6;border-width:2px 2px 2px 1px;"></div>
<svg style="left:1146.0px;top:223.0px;width:9px;height:6px" viewBox="0 0 9 6"><path d="M0.7 0.8 L4.5 4.6 L8.3 0.8" fill="none" stroke="#333" stroke-width="1.2"/></svg>
<div style="left:1163px;top:215px;width:161px;height:22px;background:#F2F2F2;border:1px solid #A6A6A6;"></div>
<div style="left:1163px;top:215px;width:143px;height:22px;line-height:22px;font-size:13.5px;color:#7F7F7F;text-align:left;font-weight:normal;white-space:nowrap;overflow:hidden;padding-left:2px;">Senior / Varsity</div>
<div style="left:1306px;top:215px;width:18px;height:22px;background:#E1E1E1;border-style:solid;border-color:#A6A6A6;border-width:2px 2px 2px 1px;"></div>
<svg style="left:1310.0px;top:223.0px;width:9px;height:6px" viewBox="0 0 9 6"><path d="M0.7 0.8 L4.5 4.6 L8.3 0.8" fill="none" stroke="#333" stroke-width="1.2"/></svg>
<div style="left:755px;top:239px;width:49px;height:23px;background:#fff;border:1px solid #A6A6A6;"></div>
<div style="left:755px;top:238px;width:49px;height:23px;line-height:23px;font-size:13.5px;color:#000;text-align:center;font-weight:normal;white-space:nowrap;overflow:hidden;">4</div>
<div style="left:807px;top:239px;width:213px;height:23px;background:#fff;border:1px solid #A6A6A6;"></div>
<div style="left:807px;top:238px;width:195px;height:23px;line-height:23px;font-size:13.5px;color:#000;text-align:left;font-weight:normal;white-space:nowrap;overflow:hidden;padding-left:2px;">Rudolfo, Rafael</div>
<div style="left:1002px;top:239px;width:18px;height:23px;background:#E1E1E1;border-style:solid;border-color:#A6A6A6;border-width:2px 2px 2px 1px;"></div>
<svg style="left:1006.0px;top:247.5px;width:9px;height:6px" viewBox="0 0 9 6"><path d="M0.7 0.8 L4.5 4.6 L8.3 0.8" fill="none" stroke="#333" stroke-width="1.2"/></svg>
<div style="left:1023px;top:239px;width:73px;height:22px;background:#F2F2F2;border:1px solid #A6A6A6;"></div>
<div style="left:1023px;top:239px;width:55px;height:22px;line-height:22px;font-size:13.5px;color:#7F7F7F;text-align:left;font-weight:normal;white-space:nowrap;overflow:hidden;padding-left:2px;">RP</div>
<div style="left:1078px;top:239px;width:18px;height:22px;background:#E1E1E1;border-style:solid;border-color:#A6A6A6;border-width:2px 2px 2px 1px;"></div>
<svg style="left:1082.0px;top:247.0px;width:9px;height:6px" viewBox="0 0 9 6"><path d="M0.7 0.8 L4.5 4.6 L8.3 0.8" fill="none" stroke="#333" stroke-width="1.2"/></svg>
<div style="left:1099px;top:239px;width:61px;height:22px;background:#F2F2F2;border:1px solid #A6A6A6;"></div>
<div style="left:1099px;top:239px;width:43px;height:22px;line-height:22px;font-size:13.5px;color:#7F7F7F;text-align:left;font-weight:normal;white-space:nowrap;overflow:hidden;padding-left:2px;">Iron</div>
<div style="left:1142px;top:239px;width:18px;height:22px;background:#E1E1E1;border-style:solid;border-color:#A6A6A6;border-width:2px 2px 2px 1px;"></div>
<svg style="left:1146.0px;top:247.0px;width:9px;height:6px" viewBox="0 0 9 6"><path d="M0.7 0.8 L4.5 4.6 L8.3 0.8" fill="none" stroke="#333" stroke-width="1.2"/></svg>
<div style="left:1163px;top:239px;width:161px;height:22px;background:#F2F2F2;border:1px solid #A6A6A6;"></div>
<div style="left:1163px;top:239px;width:143px;height:22px;line-height:22px;font-size:13.5px;color:#7F7F7F;text-align:left;font-weight:normal;white-space:nowrap;overflow:hidden;padding-left:2px;">Senior / Junior Varsity</div>
<div style="left:1306px;top:239px;width:18px;height:22px;background:#E1E1E1;border-style:solid;border-color:#A6A6A6;border-width:2px 2px 2px 1px;"></div>
<svg style="left:1310.0px;top:247.0px;width:9px;height:6px" viewBox="0 0 9 6"><path d="M0.7 0.8 L4.5 4.6 L8.3 0.8" fill="none" stroke="#333" stroke-width="1.2"/></svg>
<div style="left:732px;top:275px;width:61px;height:49px;background:#EEECE1;border:1px solid #222;border-radius:4px;"></div>
<div style="left:732px;top:275px;width:61px;height:49px;display:flex;align-items:center;justify-content:center;text-align:center;font-size:13.5px;line-height:49px;color:#000;"><span style="line-height:18px">Next<br>Athl<u>e</u>te</span></div>
<div style="left:856px;top:275px;width:93px;height:21px;background:#EEECE1;border:1px solid #222;border-radius:4px;"></div>
<div style="left:856px;top:275px;width:93px;height:21px;display:flex;align-items:center;justify-content:center;text-align:center;font-size:13.5px;line-height:21px;color:#000;"><span><u>D</u>iscipline:</span></div>
<div style="left:952px;top:275px;width:73px;height:21px;background:#fff;border:1px solid #A6A6A6;"></div>
<div style="left:952px;top:275px;width:55px;height:21px;line-height:21px;font-size:13.5px;color:#000;text-align:left;font-weight:normal;white-space:nowrap;overflow:hidden;padding-left:2px;">RP</div>
<div style="left:1007px;top:275px;width:18px;height:21px;background:#E1E1E1;border-style:solid;border-color:#A6A6A6;border-width:2px 2px 2px 1px;"></div>
<svg style="left:1011.0px;top:282.5px;width:9px;height:6px" viewBox="0 0 9 6"><path d="M0.7 0.8 L4.5 4.6 L8.3 0.8" fill="none" stroke="#333" stroke-width="1.2"/></svg>
<div style="left:1060px;top:275px;width:105px;height:21px;background:#CBCBCB;border:1px solid #222;border-radius:4px;"></div>
<div style="left:1060px;top:275px;width:105px;height:21px;display:flex;align-items:center;justify-content:center;text-align:center;font-size:13.5px;line-height:21px;color:#000;"><span><u>S</u>coresheets</span></div>
<div style="left:1204px;top:275px;width:105px;height:21px;background:#EEECE1;border:1px solid #222;border-radius:4px;"></div>
<div style="left:1204px;top:275px;width:105px;height:21px;display:flex;align-items:center;justify-content:center;text-align:center;font-size:13.5px;line-height:21px;color:#000;"><span><u>b</u>y Squad</span></div>
<div style="left:1204px;top:339px;width:105px;height:21px;background:#EEECE1;border:1px solid #222;border-radius:4px;"></div>
<div style="left:1204px;top:339px;width:105px;height:21px;display:flex;align-items:center;justify-content:center;text-align:center;font-size:13.5px;line-height:21px;color:#000;"><span>Quick <u>P</u>rint</span></div>
<div style="left:848px;top:311px;width:329px;height:353px;background:#fff;border:1px solid #A6A6A6;"></div>
<div style="left:852px;top:315px;width:73px;height:23px;background:#EEECE1;"></div>
<div style="left:852px;top:314px;width:73px;height:23px;line-height:23px;font-size:13.5px;color:#000;text-align:right;font-weight:normal;white-space:nowrap;overflow:hidden;padding-right:2px;">Squad:</div>
<div style="left:928px;top:315px;width:245px;height:23px;background:#F2F2F2;border:1px solid #A6A6A6;"></div>
<div style="left:928px;top:314px;width:245px;height:23px;line-height:23px;font-size:13.5px;color:#000;text-align:left;font-weight:normal;white-space:nowrap;overflow:hidden;padding-left:1px;">Speedy Gonzales, Baden-Powell</div>
<div style="left:852px;top:339px;width:73px;height:23px;background:#EEECE1;"></div>
<div style="left:852px;top:338px;width:73px;height:23px;line-height:23px;font-size:13.5px;color:#000;text-align:right;font-weight:normal;white-space:nowrap;overflow:hidden;padding-right:2px;">Athlete:</div>
<div style="left:928px;top:339px;width:245px;height:23px;background:#F2F2F2;border:1px solid #A6A6A6;"></div>
<div style="left:928px;top:338px;width:245px;height:23px;line-height:23px;font-size:13.5px;color:#000;text-align:left;font-weight:normal;white-space:nowrap;overflow:hidden;padding-left:1px;">Stramler, Edward</div>
<div style="left:852px;top:363px;width:73px;height:23px;background:#EEECE1;"></div>
<div style="left:852px;top:362px;width:73px;height:23px;line-height:23px;font-size:13.5px;color:#000;text-align:right;font-weight:normal;white-space:nowrap;overflow:hidden;padding-right:2px;">Stage:</div>
<div style="left:928px;top:363px;width:245px;height:23px;background:#F2F2F2;border:1px solid #A6A6A6;"></div>
<div style="left:928px;top:362px;width:245px;height:23px;line-height:23px;font-size:13.5px;color:#000;text-align:left;font-weight:normal;white-space:nowrap;overflow:hidden;padding-left:1px;">Focus</div>
<div style="left:852px;top:387px;width:73px;height:23px;background:#EEECE1;"></div>
<div style="left:852px;top:386px;width:73px;height:23px;line-height:23px;font-size:13.5px;color:#000;text-align:right;font-weight:normal;white-space:nowrap;overflow:hidden;padding-right:2px;">Discipline:</div>
<div style="left:928px;top:387px;width:245px;height:23px;background:#F2F2F2;border:1px solid #A6A6A6;"></div>
<div style="left:928px;top:386px;width:245px;height:23px;line-height:23px;font-size:13.5px;color:#000;text-align:left;font-weight:normal;white-space:nowrap;overflow:hidden;padding-left:1px;">Rimfire Pistol - Iron</div>
<div style="left:928px;top:423px;width:53px;height:24px;background:#EEECE1;"></div>
<div style="left:928px;top:421px;width:53px;height:24px;line-height:24px;font-size:13.5px;color:#000;text-align:center;font-weight:normal;white-space:nowrap;overflow:hidden;">String</div>
<div style="left:928px;top:447px;width:53px;height:1px;background:#000;"></div>
<div style="left:984px;top:423px;width:53px;height:24px;background:#EEECE1;"></div>
<div style="left:984px;top:421px;width:53px;height:24px;line-height:24px;font-size:13.5px;color:#000;text-align:center;font-weight:normal;white-space:nowrap;overflow:hidden;">Times</div>
<div style="left:984px;top:447px;width:53px;height:1px;background:#000;"></div>
<div style="left:1040px;top:423px;width:65px;height:24px;background:#EEECE1;"></div>
<div style="left:1040px;top:421px;width:65px;height:24px;line-height:24px;font-size:13.5px;color:#000;text-align:center;font-weight:normal;white-space:nowrap;overflow:hidden;">Penalties</div>
<div style="left:1040px;top:447px;width:65px;height:1px;background:#000;"></div>
<div style="left:1108px;top:423px;width:65px;height:24px;background:#EEECE1;"></div>
<div style="left:1108px;top:421px;width:65px;height:24px;line-height:24px;font-size:13.5px;color:#000;text-align:center;font-weight:normal;white-space:nowrap;overflow:hidden;">Total</div>
<div style="left:1108px;top:447px;width:65px;height:1px;background:#000;"></div>
<div style="left:928px;top:451px;width:53px;height:23px;background:#EEECE1;border:1px solid #A6A6A6;"></div>
<div style="left:928px;top:450px;width:53px;height:23px;line-height:23px;font-size:13.5px;color:#000;text-align:center;font-weight:normal;white-space:nowrap;overflow:hidden;">1.</div>
<div style="left:984px;top:451px;width:53px;height:23px;background:#fff;border:1px solid #A6A6A6;"></div>
<div style="left:997px;top:454px;width:26px;height:17px;background:#000;color:#fff;font-size:13.5px;line-height:17px;text-align:center">4.41</div>
<div style="left:1040px;top:451px;width:65px;height:23px;background:#fff;border:1px solid #A6A6A6;"></div>
<div style="left:1108px;top:451px;width:65px;height:23px;background:#F2F2F2;border:1px solid #A6A6A6;"></div>
<div style="left:1108px;top:450px;width:65px;height:23px;line-height:23px;font-size:13.5px;color:#000;text-align:center;font-weight:normal;white-space:nowrap;overflow:hidden;">4.41</div>
<div style="left:928px;top:475px;width:53px;height:23px;background:#EEECE1;border:1px solid #A6A6A6;"></div>
<div style="left:928px;top:474px;width:53px;height:23px;line-height:23px;font-size:13.5px;color:#000;text-align:center;font-weight:normal;white-space:nowrap;overflow:hidden;">2.</div>
<div style="left:984px;top:475px;width:53px;height:23px;background:#fff;border:1px solid #A6A6A6;"></div>
<div style="left:984px;top:474px;width:53px;height:23px;line-height:23px;font-size:13.5px;color:#000;text-align:center;font-weight:normal;white-space:nowrap;overflow:hidden;">5.18</div>
<div style="left:1040px;top:475px;width:65px;height:23px;background:#fff;border:1px solid #A6A6A6;"></div>
<div style="left:1108px;top:475px;width:65px;height:23px;background:#F2F2F2;border:1px solid #A6A6A6;"></div>
<div style="left:1108px;top:474px;width:65px;height:23px;line-height:23px;font-size:13.5px;color:#000;text-align:center;font-weight:normal;white-space:nowrap;overflow:hidden;">5.18</div>
<div style="left:928px;top:499px;width:53px;height:23px;background:#EEECE1;border:1px solid #A6A6A6;"></div>
<div style="left:928px;top:498px;width:53px;height:23px;line-height:23px;font-size:13.5px;color:#000;text-align:center;font-weight:normal;white-space:nowrap;overflow:hidden;">3.</div>
<div style="left:984px;top:499px;width:53px;height:23px;background:#fff;border:1px solid #A6A6A6;"></div>
<div style="left:984px;top:498px;width:53px;height:23px;line-height:23px;font-size:13.5px;color:#000;text-align:center;font-weight:normal;white-space:nowrap;overflow:hidden;">4.60</div>
<div style="left:1040px;top:499px;width:65px;height:23px;background:#fff;border:1px solid #A6A6A6;"></div>
<div style="left:1108px;top:499px;width:65px;height:23px;background:#F2F2F2;border:1px solid #A6A6A6;"></div>
<div style="left:1108px;top:498px;width:65px;height:23px;line-height:23px;font-size:13.5px;color:#000;text-align:center;font-weight:normal;white-space:nowrap;overflow:hidden;">4.60</div>
<div style="left:928px;top:523px;width:53px;height:23px;background:#EEECE1;border:1px solid #A6A6A6;"></div>
<div style="left:928px;top:522px;width:53px;height:23px;line-height:23px;font-size:13.5px;color:#000;text-align:center;font-weight:normal;white-space:nowrap;overflow:hidden;">4.</div>
<div style="left:984px;top:523px;width:53px;height:23px;background:#fff;border:1px solid #A6A6A6;"></div>
<div style="left:984px;top:522px;width:53px;height:23px;line-height:23px;font-size:13.5px;color:#000;text-align:center;font-weight:normal;white-space:nowrap;overflow:hidden;">4.47</div>
<div style="left:1040px;top:523px;width:65px;height:23px;background:#fff;border:1px solid #A6A6A6;"></div>
<div style="left:1108px;top:523px;width:65px;height:23px;background:#F2F2F2;border:1px solid #A6A6A6;"></div>
<div style="left:1108px;top:522px;width:65px;height:23px;line-height:23px;font-size:13.5px;color:#000;text-align:center;font-weight:normal;white-space:nowrap;overflow:hidden;">4.47</div>
<div style="left:928px;top:547px;width:53px;height:23px;background:#EEECE1;border:1px solid #A6A6A6;"></div>
<div style="left:928px;top:546px;width:53px;height:23px;line-height:23px;font-size:13.5px;color:#000;text-align:center;font-weight:normal;white-space:nowrap;overflow:hidden;">5.</div>
<div style="left:984px;top:547px;width:53px;height:23px;background:#fff;border:1px solid #A6A6A6;"></div>
<div style="left:984px;top:546px;width:53px;height:23px;line-height:23px;font-size:13.5px;color:#000;text-align:center;font-weight:normal;white-space:nowrap;overflow:hidden;">3.98</div>
<div style="left:1040px;top:547px;width:65px;height:23px;background:#fff;border:1px solid #A6A6A6;"></div>
<div style="left:1108px;top:547px;width:65px;height:23px;background:#F2F2F2;border:1px solid #A6A6A6;"></div>
<div style="left:1108px;top:546px;width:65px;height:23px;line-height:23px;font-size:13.5px;color:#000;text-align:center;font-weight:normal;white-space:nowrap;overflow:hidden;">3.98</div>
<div style="left:956px;top:571px;width:81px;height:23px;background:#EEECE1;"></div>
<div style="left:956px;top:570px;width:81px;height:23px;line-height:23px;font-size:13.5px;color:#000;text-align:right;font-weight:normal;white-space:nowrap;overflow:hidden;padding-right:2px;">Procedurals:</div>
<div style="left:1040px;top:571px;width:65px;height:23px;background:#fff;border:1px solid #A6A6A6;"></div>
<div style="left:1108px;top:571px;width:65px;height:23px;background:#F2F2F2;border:1px solid #A6A6A6;"></div>
<div style="left:1108px;top:599px;width:65px;height:1px;background:#000;"></div>
<div style="left:956px;top:607px;width:57px;height:21px;background:#EEECE1;border:1px solid #222;border-radius:4px;"></div>
<div style="left:956px;top:607px;width:57px;height:21px;display:flex;align-items:center;justify-content:center;text-align:center;font-size:13.5px;line-height:21px;color:#000;"><span>Null</span></div>
<div style="left:1024px;top:607px;width:81px;height:23px;background:#EEECE1;"></div>
<div style="left:1024px;top:606px;width:81px;height:23px;line-height:23px;font-size:13.5px;color:#000;text-align:right;font-weight:normal;white-space:nowrap;overflow:hidden;padding-right:2px;">Total Score:</div>
<div style="left:1108px;top:607px;width:65px;height:23px;background:#F2F2F2;border:1px solid #A6A6A6;"></div>
<div style="left:1108px;top:606px;width:65px;height:23px;line-height:23px;font-size:13.5px;color:#000;text-align:center;font-weight:normal;white-space:nowrap;overflow:hidden;">17.46</div>
<div style="left:899px;top:635px;height:20px;line-height:20px;font-size:13.5px;white-space:nowrap"><u>F</u>orfeit / Ghost</div>
<div style="left:1000px;top:639px;width:12px;height:12px;background:#fff;border:1px solid #222;"></div>
<div style="left:1024px;top:635px;width:81px;height:23px;background:#EEECE1;"></div>
<div style="left:1024px;top:634px;width:81px;height:23px;line-height:23px;font-size:13.5px;color:#000;text-align:right;font-weight:normal;white-space:nowrap;overflow:hidden;padding-right:2px;">Average:</div>
<div style="left:1108px;top:635px;width:65px;height:23px;background:#F2F2F2;border:1px solid #A6A6A6;"></div>
<div style="left:1108px;top:634px;width:65px;height:23px;line-height:23px;font-size:13.5px;color:#000;text-align:center;font-weight:normal;white-space:nowrap;overflow:hidden;">4.365</div>
<div style="left:0px;top:706px;width:1366px;height:1px;background:#C6C6C6;"></div>
<div style="left:0px;top:707px;width:1366px;height:21px;background:#F0F0F0;"></div>
<div style="left:8px;top:706px;height:20px;line-height:20px;font-size:11px;color:#444;white-space:nowrap">Enter Time</div>
<div style="left:1182px;top:706px;height:20px;line-height:20px;font-size:11px;color:#444;white-space:nowrap">Num Lock</div>
<div style="left:1251px;top:707px;width:38px;height:21px;background:#C6C6C6;"></div>
<svg style="left:1263px;top:710px;width:14px;height:13px" viewBox="0 0 14 13"><rect x="0.5" y="0.5" width="13" height="12" fill="none" stroke="#555" stroke-width="1"/><rect x="0.5" y="0.5" width="13" height="2.5" fill="#555"/><rect x="2" y="5.5" width="3.5" height="1" fill="#555"/><rect x="2" y="8.5" width="3.5" height="1" fill="#555"/><rect x="6.5" y="5" width="5.5" height="2" fill="#555"/><rect x="6.5" y="8" width="5.5" height="2" fill="#555"/></svg>
<svg style="left:1301px;top:710px;width:14px;height:13px" viewBox="0 0 14 13"><path d="M0.5 0.5 h5 M0.5 12.5 h5 M8.5 0.5 h5 M8.5 12.5 h5 M3 0.5 v12 M11 0.5 v12 M3 3.5 h8 M3 9.5 h8" fill="none" stroke="#555" stroke-width="1"/><rect x="5" y="5" width="6" height="2.5" fill="#555"/></svg>
<svg style="left:1338px;top:709px;width:16px;height:15px" viewBox="0 0 16 15"><path d="M1.5 1 v8 h7 z" fill="none" stroke="#555" stroke-width="1"/><path d="M5.5 9 L14 1.5" fill="none" stroke="#555" stroke-width="1.8"/><rect x="1.5" y="10.5" width="13" height="4" fill="none" stroke="#555" stroke-width="1"/><path d="M4 10.5 v1.8 M7 10.5 v1.8 M10 10.5 v1.8 M13 10.5 v1.8" stroke="#555" stroke-width="0.8"/></svg>
<div style="left:0px;top:728px;width:1366px;height:40px;background:#04101A;"></div>
<svg style="left:16px;top:740px;width:17px;height:17px" viewBox="0 0 17 17"><path d="M0 2.3 L7 1.3 V8 H0 z M8 1.1 L17 0 V8 H8 z M0 9 H7 V15.7 L0 14.7 z M8 9 H17 V17 L8 15.9 z" fill="#fff"/></svg>
<svg style="left:65px;top:736px;width:20px;height:24px" viewBox="0 0 20 24"><path d="M4 1 L7 0 h6 l3 1 l3 3 l-1 4 l-1.2 7 l-4.5 5.5 l-2.3 1.5 l-2.3 -1.5 l-4.5 -5.5 l-1.2 -7 l-1 -4 z" fill="#F0642A"/><path d="M3.5 6 l2.5 -1 l2 1 h4 l2 -1 l2.5 1 l-1 3 l-1.5 2 l-1 4.5 l-3 3 l-3 -3 l-1 -4.5 l-1.5 -2 z" fill="#fff"/><path d="M7 10 l1.5 1 M13 10 l-1.5 1 M8.5 15 h3 l-1.5 1.5 z" stroke="#F0642A" stroke-width="1" fill="#F0642A"/></svg>
<svg style="left:113px;top:736px;width:23px;height:23px" viewBox="0 0 23 23"><rect x="9" y="5" width="13" height="12" fill="#fff"/><path d="M9 6 l6.5 5 l6.5 -5" fill="none" stroke="#0F6CC0" stroke-width="1.2"/><path d="M0 3 L12 0 V23 L0 20 z" fill="#0F6CC0"/><ellipse cx="5.8" cy="11.5" rx="3" ry="3.8" fill="none" stroke="#fff" stroke-width="1.8"/></svg>
<svg style="left:160px;top:736px;width:24px;height:24px" viewBox="0 0 24 24"><path d="M8 2 L22 3 L21 22 L5 20 z" fill="#E8ECEE"/><path d="M20.5 3 L22 3.2 L21 22 L19.5 21.8 z" fill="#D9A052"/><path d="M6 1 L20 2 L12 20 L1 18 z" fill="#8FC0CF"/><path d="M6 1 L20 2 L17 9 L4 8 z" fill="#B9DCE6"/><path d="M1 18 L12 20 L9 14 L3 13 z" fill="#5A9AB0"/></svg>
<svg style="left:210px;top:736px;width:24px;height:24px" viewBox="0 0 24 24"><rect width="24" height="24" fill="#0E8EE9"/><circle cx="12" cy="12" r="9.5" fill="#fff"/><path d="M4.5 12 L8.5 8.5 V10.8 H15.5 V8.5 L19.5 12 L15.5 15.5 V13.2 H8.5 V15.5 z" fill="#0E8EE9"/></svg>
<svg style="left:259px;top:736px;width:24px;height:24px" viewBox="0 0 24 24"><rect x="2" y="1" width="17" height="14" fill="#BFC8D8"/><rect x="3.5" y="2.5" width="14" height="10.5" fill="#2A5BD7"/><path d="M5 14 h10 l2 4 h-14 z" fill="#C9CCD2"/><circle cx="17.5" cy="18" r="5.5" fill="#E6E6E6"/><path d="M15 16 l2 2 l-2 2 M20 16 l-2 2 l2 2" stroke="#2E9E2E" stroke-width="1.3" fill="none"/></svg>
<svg style="left:307px;top:739px;width:26px;height:18px" viewBox="0 0 26 18"><path d="M8 1 H26 L22 17 H4 z" fill="#64A8E0"/><path d="M10 4 H22.5 L20 14 H7.5 z" fill="#1E3F6A"/><rect x="11" y="7.5" width="8" height="3" fill="#D6E8F8"/><path d="M0 6 h5 M1 9 h4 M0 12 h4" stroke="#64A8E0" stroke-width="1"/></svg>
<svg style="left:358px;top:738px;width:22px;height:20px" viewBox="0 0 22 20"><path d="M0 2 H8 L10 4 H22 V20 H0 z" fill="#F4C550"/><rect x="0" y="6" width="22" height="14" fill="#FFD866"/><path d="M5 20 V12 H17 V20 H14 V15 H8 V20 z" fill="#2A9BEA"/></svg>
<div style="left:394px;top:728px;width:48px;height:38px;background:#343C46;"></div>
<svg style="left:406px;top:737px;width:24px;height:22px" viewBox="0 0 24 22"><ellipse cx="17.5" cy="5" rx="6" ry="2.5" fill="#fff"/><rect x="11.5" y="5" width="12" height="13" fill="#fff"/><ellipse cx="17.5" cy="18" rx="6" ry="2.5" fill="#fff"/><path d="M11.5 9 q6 2.5 12 0 M11.5 13.5 q6 2.5 12 0" stroke="#A4373A" stroke-width="1.2" fill="none"/><path d="M0 2.5 L13 0 V22 L0 19.5 z" fill="#A4373A"/><text x="3" y="15" font-family="Liberation Sans" font-size="10" font-weight="bold" fill="#fff">A</text></svg>
<div style="left:55px;top:766px;width:40px;height:2px;background:#9ACBEF;"></div>
<div style="left:104px;top:766px;width:40px;height:2px;background:#9ACBEF;"></div>
<div style="left:153px;top:766px;width:40px;height:2px;background:#9ACBEF;"></div>
<div style="left:202px;top:766px;width:40px;height:2px;background:#9ACBEF;"></div>
<div style="left:251px;top:766px;width:40px;height:2px;background:#9ACBEF;"></div>
<div style="left:300px;top:766px;width:40px;height:2px;background:#9ACBEF;"></div>
<div style="left:349px;top:766px;width:40px;height:2px;background:#9ACBEF;"></div>
<div style="left:394px;top:766px;width:48px;height:2px;background:#9ACBEF;"></div>
<svg style="left:1003px;top:740px;width:15px;height:17px" viewBox="0 0 15 17"><path d="M1.5 5.5 h6 v8 l-1.5 2 h-3 l-1.5 -2 z M2.5 0.5 h4 v5 h-4 z" fill="none" stroke="#fff" stroke-width="1"/><path d="M9 14 l1.5 1.5 l3.5 -4" fill="none" stroke="#fff" stroke-width="1"/></svg>
<svg style="left:1025px;top:740px;width:16px;height:16px" viewBox="0 0 16 16"><rect width="16" height="16" rx="1.5" fill="#D5203C"/><path d="M9 2.5 q-5 5 -3 11 q6 -2 5 -9 q2 5 -2 9" fill="none" stroke="#fff" stroke-width="1.2"/></svg>
<svg style="left:1048px;top:743px;width:17px;height:10px" viewBox="0 0 17 10"><path d="M1.5 9.2 a2.7 2.7 0 0 1 1.5 -4.6 a4.8 4.8 0 0 1 8.8 -0.5 a2.8 2.8 0 0 1 3.8 5.1 z" fill="#0A2A4A" stroke="#2F7FD8" stroke-width="1.4"/></svg>
<svg style="left:1072px;top:739px;width:18px;height:18px" viewBox="0 0 18 18"><rect x="7" y="4" width="11" height="10" fill="#fff"/><path d="M7 5 l5.5 4 l5.5 -4" fill="none" stroke="#0F6CC0"/><path d="M0 2 L10 0 V18 L0 16 z" fill="#0F6CC0"/><ellipse cx="5" cy="9" rx="2.5" ry="3.2" fill="none" stroke="#fff" stroke-width="1.5"/></svg>
<svg style="left:1097px;top:740px;width:17px;height:17px" viewBox="0 0 17 17"><rect x="8" y="0" width="9" height="9" fill="#E52A2A"/><rect x="0" y="0" width="8" height="8" fill="#fff"/><rect x="9" y="9" width="8" height="8" fill="#fff"/><rect x="0" y="9" width="8" height="8" fill="#0A111C" stroke="#fff"/><path d="M2 15 l4 -4 M3 11 h3 v3" stroke="#fff" fill="none"/></svg>
<svg style="left:1123px;top:741px;width:12px;height:16px" viewBox="0 0 12 16"><ellipse cx="6" cy="8" rx="5.8" ry="7.8" fill="#1B3A73"/><path d="M3 5 L8.5 10 L6 12.5 V3.5 L8.5 6 L3 11" fill="none" stroke="#fff" stroke-width="1"/></svg>
<svg style="left:1145px;top:740px;width:16px;height:16px" viewBox="0 0 16 16"><rect width="16" height="16" fill="#0E8EE9"/><circle cx="8" cy="8" r="6" fill="#fff"/><path d="M3.5 8 L6 6 V7.3 H10 V6 L12.5 8 L10 10 V8.7 H6 V10 z" fill="#0E8EE9"/><rect x="8.5" y="12" width="7.5" height="4" fill="#7BC043"/></svg>
<svg style="left:1169px;top:740px;width:16px;height:16px" viewBox="0 0 16 16"><circle cx="8" cy="8" r="7.7" fill="#6E9FB8"/><path d="M2 4.5 q5 -4 11 1.5 q-1.5 5.5 -7 8 q2.5 -5 -4 -9.5" fill="#E6EEF3"/><path d="M9 9 q3 2 5 0 q-1 4 -5 5 z" fill="#4D9A4D"/></svg>
<svg style="left:1193px;top:741px;width:17px;height:14px" viewBox="0 0 17 14"><path d="M1.5 0.5 v3 M4.5 0.5 v3 M0.5 3.5 h5 v2.5 l-2 2 v5" fill="none" stroke="#fff" stroke-width="1"/><rect x="6.5" y="3.5" width="9" height="7" fill="none" stroke="#fff" stroke-width="1"/><rect x="15.5" y="5.5" width="1.5" height="3" fill="#fff"/><rect x="8" y="5" width="2.5" height="4" fill="#fff"/></svg>
<svg style="left:1219px;top:744px;width:14px;height:13px" viewBox="0 0 14 13"><path d="M0.8 8 a12 12 0 0 1 9.5 -7 M2.8 10 a8 8 0 0 1 6.5 -5 M4.8 12 a4 4 0 0 1 3.5 -3" fill="none" stroke="#9AA0A8" stroke-width="1"/><circle cx="11.5" cy="11" r="1.3" fill="#fff"/></svg>
<svg style="left:1241px;top:741px;width:17px;height:15px" viewBox="0 0 17 15"><path d="M0.5 5 h3 l4.5 -4 v13 l-4.5 -4 h-3 z" fill="none" stroke="#fff" stroke-width="1"/><path d="M10.5 4.5 q1.7 3 0 6 M13.5 2.5 q3 5 0 10" fill="none" stroke="#fff" stroke-width="1"/></svg>
<div style="left:1266px;top:738px;height:20px;line-height:20px;font-size:11.5px;color:#fff;white-space:nowrap">ENG</div>
<div style="left:1300px;top:731px;width:58px;height:16px;line-height:16px;font-size:11.3px;color:#fff;text-align:center;white-space:nowrap">2:22 PM</div>
<div style="left:1300px;top:748px;width:58px;height:16px;line-height:16px;font-size:11.5px;color:#fff;text-align:center;white-space:nowrap">10/7/2017</div>
<div style="left:1362px;top:728px;width:1px;height:40px;background:#5A6068;"></div>
</body></html>
